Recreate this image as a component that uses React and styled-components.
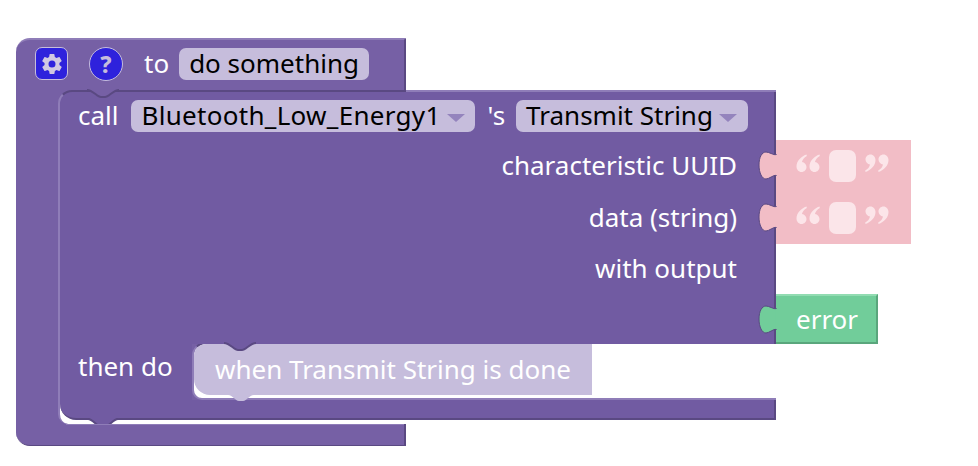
import styled, { createGlobalStyle } from "styled-components"

const GlobalStyle = createGlobalStyle`
  html, body {
    margin: 0;
    background: #fff;
  }
  body {
    font-family: "Noto Sans", "Open Sans", sans-serif;
  }
`

const PURPLE = "#715ba2"
const OUTER = "#7660a5"
const DARK = "#5a4982"
const LIGHT = "#8f7db8"
const PILL = "#c6bddc"
const PINK = "#f2bdc6"
const GREEN = "#71cd9a"

const Canvas = styled.div`
  width: 978px;
  height: 466px;
  padding: 38px 0 0 16px;
  box-sizing: border-box;
  overflow: hidden;
`

const Hat = styled.div`
  width: 390px;
  display: flex;
  flex-direction: column;
`

const HatHead = styled.div`
  height: 52px;
  box-sizing: border-box;
  display: flex;
  align-items: center;
  padding: 0 0 3px 19px;
  background: ${OUTER};
  border-top: 2px solid ${LIGHT};
  border-right: 2px solid ${DARK};
  border-top-left-radius: 14px;
`

const HatBody = styled.div`
  display: flex;
  background: ${OUTER};
`

const HatRail = styled.div`
  width: 42px;
  flex: none;
`

const HatFoot = styled.div`
  position: relative;
  height: 22px;
  box-sizing: border-box;
  background: ${OUTER};
  border-right: 2px solid ${DARK};
  border-bottom: 1px solid ${DARK};
  border-bottom-left-radius: 14px;

  /* highlight only under the gap, not across the rail */
  &::before {
    content: "";
    position: absolute;
    left: 50px;
    right: 0;
    top: 0;
    height: 1px;
    background: ${LIGHT};
  }
`

const GearButton = styled.div`
  width: 33px;
  height: 33px;
  box-sizing: border-box;
  display: flex;
  align-items: center;
  justify-content: center;
  background: #2e22dc;
  border: 1.5px solid ${PILL};
  border-radius: 7px;
`

const HelpButton = styled(GearButton)`
  margin-left: 21px;
  border-radius: 50%;
  width: 34px;
  height: 34px;
  color: ${PILL};
  font-size: 23px;
  font-weight: 800;
`

const Label = styled.span`
  color: #fff;
  font-size: 26px;
  line-height: 30px;
  padding-bottom: 2px;
  white-space: nowrap;
  margin-left: ${({ $left }) => $left || 0}px;
`

const Pill = styled.span`
  height: 32px;
  box-sizing: border-box;
  display: inline-flex;
  align-items: center;
  gap: 6px;
  margin-left: ${({ $left }) => $left || 0}px;
  padding: 0 ${({ $right }) => $right || 10}px 2px 10px;
  background: ${PILL};
  border-radius: 7px;
  color: #000;
  font-size: 26px;
  letter-spacing: ${({ $spacing }) => $spacing || 0}px;
  white-space: nowrap;
`

const Caret = styled.span`
  width: 0;
  height: 0;
  border-left: 9px solid transparent;
  border-right: 9px solid transparent;
  border-top: 8px solid #9484bd;
  margin-top: 5px;
`

const CallBlock = styled.div`
  position: relative;
  width: 718px;
  flex: none;
  display: flex;
  flex-direction: column;
`

const CallTop = styled.div`
  display: flex;
  height: 254px;
`

const CallPanel = styled.div`
  position: relative;
  width: 718px;
  flex: none;
  box-sizing: border-box;
  display: flex;
  flex-direction: column;
  background: ${PURPLE};
  border-top: 2px solid ${DARK};
  border-left: 2px solid ${LIGHT};
  border-right: 2px solid ${DARK};
  border-top-left-radius: 14px;

  /* the top edge is only dark where it sits under the hat block */
  &::after {
    content: "";
    position: absolute;
    left: 346px;
    right: -2px;
    top: -2px;
    height: 2px;
    background: ${LIGHT};
  }
`

const HeadRow = styled.div`
  height: 48px;
  display: flex;
  align-items: center;
  padding: 0 0 0 18px;
`

const InputRow = styled.div`
  height: ${({ $height }) => $height}px;
  display: flex;
  align-items: center;
  justify-content: flex-end;
  padding-right: 37px;
`

const Sockets = styled.div`
  flex: none;
  display: flex;
  flex-direction: column;
  padding-top: 50px;
`

const StringBlock = styled.div`
  position: relative;
  width: 135px;
  height: 52px;
  box-sizing: border-box;
  padding-left: 20px;
  display: flex;
  align-items: center;
  gap: 9px;
  background: ${PINK};
`

const QuoteIcon = styled.svg`
  flex: none;
  margin-top: -6px;
`

const EmptyField = styled.span`
  width: 27px;
  height: 32px;
  border-radius: 7px;
  background: #fbe5e9;
`

const ErrorBlock = styled.div`
  position: relative;
  width: 102px;
  height: 50px;
  margin-top: 50px;
  box-sizing: border-box;
  padding-left: 20px;
  display: flex;
  align-items: center;
  background: ${GREEN};
  border-top: 2px solid #92dcb2;
  border-right: 2px solid #5aa67c;
  border-bottom: 2px solid #5aa67c;
  color: #fff;
  font-size: 26px;
`

const Tab = styled.svg`
  position: absolute;
  left: -18px;
  top: ${({ $top }) => $top}px;
`

const ThenRow = styled.div`
  height: 56px;
  display: flex;
`

const ThenRail = styled.div`
  width: 134px;
  flex: none;
  box-sizing: border-box;
  padding: 7px 0 0 18px;
  background: ${PURPLE};
  border-left: 2px solid ${LIGHT};
`

const Slot = styled.div`
  flex: 1;
  height: 58px;
  margin-top: -2px;
  box-sizing: border-box;
  background: #fff;
  border-top: 2px solid ${DARK};
  border-left: 2px solid ${LIGHT};
  border-bottom: 2px solid ${LIGHT};
  border-top-left-radius: 14px;
  border-bottom-left-radius: 10px;
`

const Statement = styled.div`
  width: 398px;
  height: 51px;
  box-sizing: border-box;
  padding: 0 0 2px 21px;
  display: flex;
  align-items: center;
  background: ${PILL};
  color: #fff;
  font-size: 26px;
  white-space: nowrap;
  border-top-left-radius: 12px;
  border-bottom-left-radius: 16px;
`

const FootWell = styled.div`
  height: 24px;
  background: #fff;
  border-left: 2px solid ${LIGHT};
  border-bottom-left-radius: 10px;
`

const CallFoot = styled.div`
  height: 20px;
  box-sizing: border-box;
  background: ${PURPLE};
  border-right: 2px solid ${DARK};
  border-bottom: 2px solid ${DARK};
  border-bottom-left-radius: 16px;
`

const Notch = styled.svg`
  position: absolute;
  left: ${({ $left }) => $left}px;
  top: ${({ $top }) => $top}px;
`

const Gear = () => (
  <svg width="24" height="24" viewBox="0 0 24 24" fill="#d0c8e2">
    <path d="M19.4 13c.04-.32.06-.66.06-1s-.02-.68-.06-1l2.1-1.65a.5.5 0 0 0 .12-.64l-2-3.46a.5.5 0 0 0-.61-.22l-2.49 1a7.3 7.3 0 0 0-1.7-1l-.37-2.65A.5.5 0 0 0 14 2h-4a.5.5 0 0 0-.49.42l-.38 2.65a7.7 7.7 0 0 0-1.69 1l-2.49-1a.5.5 0 0 0-.61.22l-2 3.46a.5.5 0 0 0 .12.64L4.57 11a7.9 7.9 0 0 0 0 2l-2.11 1.65a.5.5 0 0 0-.12.64l2 3.46c.12.22.39.3.61.22l2.49-1c.52.4 1.08.73 1.69 1l.38 2.65c.04.24.25.42.49.42h4c.25 0 .45-.18.49-.42l.38-2.65a7.3 7.3 0 0 0 1.69-1l2.49 1c.23.09.49 0 .61-.22l2-3.46a.5.5 0 0 0-.12-.64zM12 15.5a3.5 3.5 0 1 1 0-7 3.5 3.5 0 0 1 0 7z" />
  </svg>
)

const COMMA =
  "M10.5 0.5 C5 2.5 0.5 7 0.5 12.5 C0.5 15.5 2.7 18 5.5 18 C8.3 18 10.5 15.8 10.5 13 C10.5 10.3 8.5 8.5 6 8 C6.5 5.5 8 3.5 10.8 2 Z"

// the text block's quote marks are pictures in the original editor
const Quote = ({ closing }) => (
  <QuoteIcon width="24" height="19" viewBox="0 0 24 19" fill="#fce5e9">
    <g transform={closing ? "rotate(180 12 9.25)" : undefined}>
      <path d={COMMA} />
      <path d={COMMA} transform="translate(13 0)" />
    </g>
  </QuoteIcon>
)

const PuzzleTab = ({ fill, top }) => (
  <Tab $top={top} width="19" height="29" viewBox="0 0 19 29">
    <path
      d="M19 4 C15 4 11 1 8 1 C4 1 1 6 1 14 C1 22 4 28 8 28 C11 28 15 24 19 24 Z"
      fill={fill}
      stroke={DARK}
      strokeWidth="1"
    />
    <path d="M18.5 4 L18.5 24" stroke={fill} strokeWidth="2" />
  </Tab>
)

const TopNotch = ({ left, top, fill }) => (
  <Notch $left={left} $top={top} width="32" height="10" viewBox="0 0 32 10">
    <path d="M0 1 C6 1 10 8 14 8 L18 8 C22 8 26 1 32 1 L32 0 L0 0 Z" fill={fill} />
    <path d="M0 1 C6 1 10 8 14 8 L18 8 C22 8 26 1 32 1" fill="none" stroke={DARK} strokeWidth="2" />
  </Notch>
)

const StringSocket = () => (
  <StringBlock>
    <PuzzleTab top={11} fill={PINK} />
    <Quote />
    <EmptyField />
    <Quote closing />
  </StringBlock>
)

const App = () => {
  return (
    <Canvas>
      <GlobalStyle />
      <Hat>
        <HatHead>
          <GearButton>
            <Gear />
          </GearButton>
          <HelpButton>?</HelpButton>
          <Label $left={21}>to</Label>
          <Pill $left={10}>do something</Pill>
        </HatHead>
        <HatBody>
          <HatRail />
          <CallBlock>
            <CallTop>
              <CallPanel>
                <HeadRow>
                  <Label>call</Label>
                  <Pill $left={13} $spacing={0.3}>
                    Bluetooth_Low_Energy1
                    <Caret />
                  </Pill>
                  <Label $left={13}>'s</Label>
                  <Pill $left={11} $right={11}>
                    Transmit String
                    <Caret />
                  </Pill>
                </HeadRow>
                <InputRow $height={52}>
                  <Label>characteristic UUID</Label>
                </InputRow>
                <InputRow $height={52}>
                  <Label>data (string)</Label>
                </InputRow>
                <InputRow $height={50}>
                  <Label>with output</Label>
                </InputRow>
              </CallPanel>
              <Sockets>
                <StringSocket />
                <StringSocket />
                <ErrorBlock>
                  <PuzzleTab top={9} fill={GREEN} />
                  error
                </ErrorBlock>
              </Sockets>
            </CallTop>
            <ThenRow>
              <ThenRail>
                <Label>then do</Label>
              </ThenRail>
              <Slot>
                <Statement>when Transmit String is done</Statement>
              </Slot>
            </ThenRow>
            <FootWell>
              <CallFoot />
            </FootWell>
            <TopNotch left={29} top={-1} fill={OUTER} />
            <TopNotch left={166} top={252} fill={PURPLE} />
            <Notch $left={170} $top={305} width="26" height="7" viewBox="0 0 26 7">
              <path d="M0 0 C5 0 7 6 11 6 L15 6 C19 6 21 0 26 0 Z" fill={PILL} />
            </Notch>
            <Notch $left={29} $top={327} width="32" height="11" viewBox="0 0 32 11">
              <path d="M0 1 C6 1 9 9 13 9 L19 9 C23 9 26 1 32 1 Z" fill={PURPLE} />
              <path d="M1 2 C6 2 9 9 13 9 L19 9 C23 9 26 2 31 2" fill="none" stroke={DARK} strokeWidth="2" />
            </Notch>
          </CallBlock>
        </HatBody>
        <HatFoot />
      </Hat>
    </Canvas>
  )
}

export default App
